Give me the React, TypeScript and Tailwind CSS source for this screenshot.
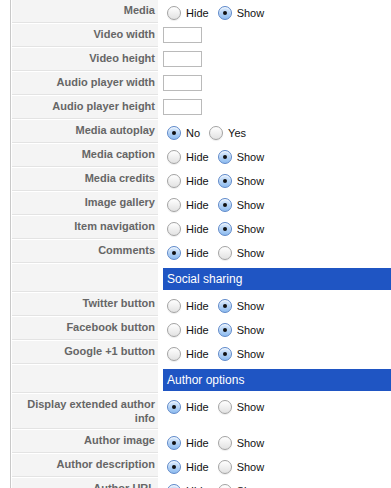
type Row =
  | { kind: "radio"; label: string; options: [string, string]; checked: 0 | 1 }
  | { kind: "input"; label: string }
  | { kind: "header"; title: string };

const rows: Row[] = [
  { kind: "radio", label: "Media", options: ["Hide", "Show"], checked: 1 },
  { kind: "input", label: "Video width" },
  { kind: "input", label: "Video height" },
  { kind: "input", label: "Audio player width" },
  { kind: "input", label: "Audio player height" },
  { kind: "radio", label: "Media autoplay", options: ["No", "Yes"], checked: 0 },
  { kind: "radio", label: "Media caption", options: ["Hide", "Show"], checked: 1 },
  { kind: "radio", label: "Media credits", options: ["Hide", "Show"], checked: 1 },
  { kind: "radio", label: "Image gallery", options: ["Hide", "Show"], checked: 1 },
  { kind: "radio", label: "Item navigation", options: ["Hide", "Show"], checked: 1 },
  { kind: "radio", label: "Comments", options: ["Hide", "Show"], checked: 0 },
  { kind: "header", title: "Social sharing" },
  { kind: "radio", label: "Twitter button", options: ["Hide", "Show"], checked: 1 },
  { kind: "radio", label: "Facebook button", options: ["Hide", "Show"], checked: 1 },
  { kind: "radio", label: "Google +1 button", options: ["Hide", "Show"], checked: 1 },
  { kind: "header", title: "Author options" },
  { kind: "radio", label: "Display extended author info", options: ["Hide", "Show"], checked: 0 },
  { kind: "radio", label: "Author image", options: ["Hide", "Show"], checked: 0 },
  { kind: "radio", label: "Author description", options: ["Hide", "Show"], checked: 0 },
  { kind: "radio", label: "Author URL", options: ["Hide", "Show"], checked: 0 },
  { kind: "radio", label: "Author email", options: ["Hide", "Show"], checked: 0 },
];

function Radio({ on, className = "" }: { on: boolean; className?: string }) {
  if (on) {
    return (
      <span
        className={`flex h-[14px] w-[14px] shrink-0 items-center justify-center rounded-full border border-[#5d88c9] bg-linear-to-b from-[#dcebfc] to-[#8dbbef] shadow-[inset_0_1px_1px_rgba(255,255,255,0.8)] ${className}`}
      >
        <span className="block h-[4px] w-[4px] rounded-full bg-[#111]" />
      </span>
    );
  }
  return (
    <span
      className={`block h-[14px] w-[14px] shrink-0 rounded-full border border-[#a3a3a3] bg-linear-to-b from-white to-[#e2e2e2] shadow-[0_1px_1px_rgba(0,0,0,0.08)] ${className}`}
    />
  );
}

function App() {
  return (
    <div className="h-[488px] overflow-hidden bg-white font-['Liberation_Sans',Arial,sans-serif]">
      <div className="ml-[10px] border-l border-[#c9c9c9] pl-[1px]">
        <div className="grid grid-cols-[146px_1fr] gap-x-[1px] gap-y-[1px]">
          {rows.map((row, i) => {
            if (row.kind === "header") {
              return (
                <div key={i} className="contents">
                  <div className="border-b border-[#e3e3e3] bg-[#f4f4f4]" />
                  <div className="pt-[4px] pb-[2px] pl-[4px]">
                    <div className="h-[22px] bg-[#1f55c3] pl-[4px] text-[12px] leading-[22px] text-white">
                      {row.title}
                    </div>
                  </div>
                </div>
              );
            }
            return (
              <div key={i} className="contents">
                <div className="min-h-[23px] border-b border-[#e3e3e3] bg-[#f4f4f4] pt-[3px] pr-[3px] pb-[3px] pl-[4px] text-right text-[11px] font-bold leading-[14px] text-[#666]">
                  {row.label}
                </div>
                {row.kind === "input" ? (
                  <div className="pt-[3px] pl-[4px]">
                    <div className="h-[16px] w-[39px] border border-[#bababa] bg-white" />
                  </div>
                ) : (
                  <div className="flex h-[20px] items-center pt-[6px] pl-[8px] text-[11px] text-[#111]">
                    <Radio on={row.checked === 0} />
                    <span className="ml-[5px]">{row.options[0]}</span>
                    <Radio on={row.checked === 1} className="ml-[9px]" />
                    <span className="ml-[5px]">{row.options[1]}</span>
                  </div>
                )}
              </div>
            );
          })}
        </div>
      </div>
    </div>
  );
}

export default App;
